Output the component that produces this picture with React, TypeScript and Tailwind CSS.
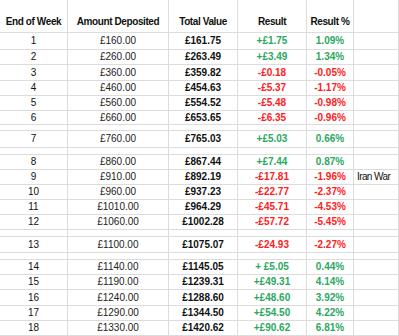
import React from 'react';

type Row =
  | { spacer: true; h: string }
  | {
      spacer?: false;
      h: string;
      week: string;
      dep: string;
      total: string;
      res: string;
      pct: string;
      up: boolean;
      note?: string;
    };

const rows: Row[] = [
  { h: 'h-[17px]', week: '1', dep: '£160.00', total: '£161.75', res: '+£1.75', pct: '1.09%', up: true },
  { h: 'h-[15px]', week: '2', dep: '£260.00', total: '£263.49', res: '+£3.49', pct: '1.34%', up: true },
  { h: 'h-[16px]', week: '3', dep: '£360.00', total: '£359.82', res: '-£0.18', pct: '-0.05%', up: false },
  { h: 'h-[15px]', week: '4', dep: '£460.00', total: '£454.63', res: '-£5.37', pct: '-1.17%', up: false },
  { h: 'h-[15px]', week: '5', dep: '£560.00', total: '£554.52', res: '-£5.48', pct: '-0.98%', up: false },
  { h: 'h-[14px]', week: '6', dep: '£660.00', total: '£653.65', res: '-£6.35', pct: '-0.96%', up: false },
  { spacer: true, h: 'h-[6px]' },
  { h: 'h-[17px]', week: '7', dep: '£760.00', total: '£765.03', res: '+£5.03', pct: '0.66%', up: true },
  { spacer: true, h: 'h-[7px]' },
  { h: 'h-[15px]', week: '8', dep: '£860.00', total: '£867.44', res: '+£7.44', pct: '0.87%', up: true },
  { h: 'h-[15px]', week: '9', dep: '£910.00', total: '£892.19', res: '-£17.81', pct: '-1.96%', up: false, note: 'Iran War' },
  { h: 'h-[15px]', week: '10', dep: '£960.00', total: '£937.23', res: '-£22.77', pct: '-2.37%', up: false },
  { h: 'h-[15px]', week: '11', dep: '£1010.00', total: '£964.29', res: '-£45.71', pct: '-4.53%', up: false },
  { h: 'h-[15px]', week: '12', dep: '£1060.00', total: '£1002.28', res: '-£57.72', pct: '-5.45%', up: false },
  { spacer: true, h: 'h-[7px]' },
  { h: 'h-[16px]', week: '13', dep: '£1100.00', total: '£1075.07', res: '-£24.93', pct: '-2.27%', up: false },
  { spacer: true, h: 'h-[7px]' },
  { h: 'h-[15px]', week: '14', dep: '£1140.00', total: '£1145.05', res: '+ £5.05', pct: '0.44%', up: true },
  { h: 'h-[15px]', week: '15', dep: '£1190.00', total: '£1239.31', res: '+£49.31', pct: '4.14%', up: true },
  { h: 'h-[16px]', week: '16', dep: '£1240.00', total: '£1288.60', res: '+£48.60', pct: '3.92%', up: true },
  { h: 'h-[15px]', week: '17', dep: '£1290.00', total: '£1344.50', res: '+£54.50', pct: '4.22%', up: true },
  { h: 'h-[15px]', week: '18', dep: '£1330.00', total: '£1420.62', res: '+£90.62', pct: '6.81%', up: true },
  { spacer: true, h: 'h-[15px]' },
];

const cols = 'grid grid-cols-[68px_101px_69px_69px_47px_45px]';
const cell = 'border-r border-b border-[#dcdcdc] flex items-center justify-center';

export default function App() {
  return (
    <div className="w-[399px] h-[336px] overflow-hidden bg-white font-['Liberation_Sans',Arial,sans-serif] text-[10px] text-[#111]">
      {/* header */}
      <div className={`${cols} h-[33px] font-bold tracking-[-0.4px]`}>
        {['End of Week', 'Amount Deposited', 'Total Value', 'Result', 'Result %', ''].map((h, i) => (
          <div key={i} className="border-r border-b border-[#dcdcdc] flex items-end justify-center pb-[3px]">
            {h}
          </div>
        ))}
      </div>

      {rows.map((r, i) =>
        r.spacer ? (
          <div key={i} className={`${cols} ${r.h}`}>
            {[0, 1, 2, 3, 4, 5].map((c) => (
              <div key={c} className="border-r border-b border-[#dcdcdc]" />
            ))}
          </div>
        ) : (
          <div key={i} className={`${cols} ${r.h} leading-none`}>
            <div className={cell}>{r.week}</div>
            <div className={`${cell} text-[#222]`}>{r.dep}</div>
            <div className={`${cell} font-bold`}>{r.total}</div>
            <div className={`${cell} font-bold ${r.up ? 'text-[#2aa860]' : 'text-[#ff2020]'}`}>{r.res}</div>
            <div className={`${cell} font-bold ${r.up ? 'text-[#2aa860]' : 'text-[#ff2020]'}`}>{r.pct}</div>
            <div className="border-r border-b border-[#dcdcdc] flex items-center pl-[3px] tracking-[-0.6px] whitespace-nowrap">
              {r.note}
            </div>
          </div>
        )
      )}
    </div>
  );
}
